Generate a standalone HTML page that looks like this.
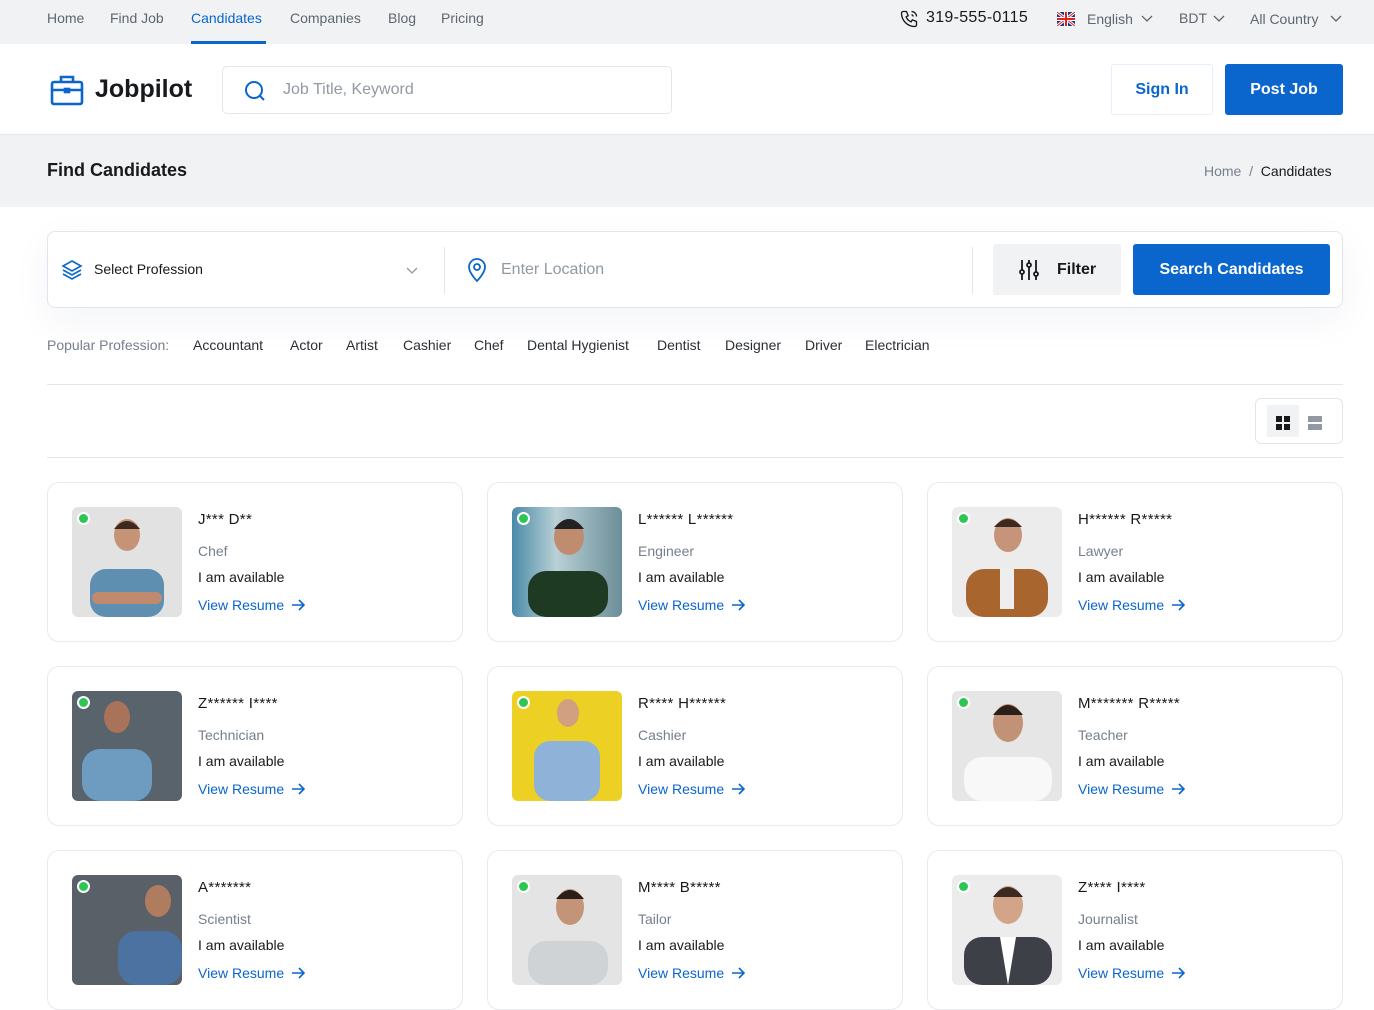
<!DOCTYPE html>
<html><head><meta charset="utf-8"><style>
*{box-sizing:border-box;margin:0;padding:0}
body{width:1374px;height:968px;overflow:hidden;background:#fff;font-family:"Liberation Sans",sans-serif;color:#18191c;position:relative}
.abs{position:absolute}
.top{position:absolute;left:0;top:0;width:1374px;height:44px;background:#f1f2f4}
.top a{position:absolute;top:10px;font-size:14px;color:#5e6670;text-decoration:none}
.hdr{position:absolute;top:44px;left:0;width:1374px;height:91px;border-bottom:1px solid #e4e5e8}
.band{position:absolute;top:135px;left:0;width:1374px;height:72px;background:#f1f2f4}
.card{position:absolute;width:416px;height:160px;border:1px solid #e8eaee;border-radius:12px;background:#fff}
.ph{position:absolute;left:24px;top:24px;width:110px;height:110px;border-radius:6px;overflow:hidden}
.dot{position:absolute;left:5px;top:5px;width:13px;height:13px;border-radius:50%;background:#2dc653;border:2px solid #fff;z-index:2}
.nm{position:absolute;left:150px;top:28px;font-size:15px;color:#18191c;letter-spacing:0.3px}
.pr{position:absolute;left:150px;top:60px;font-size:14px;color:#767f8c}
.av{position:absolute;left:150px;top:86px;font-size:14px;color:#18191c}
.vr{position:absolute;left:150px;top:114px;font-size:14px;color:#0a65cc;white-space:nowrap}
.vr svg{vertical-align:-3px;margin-left:6px}
.pp{position:absolute;top:337px;font-size:14px;color:#2b2f35}
.chev{position:absolute;top:15px}
</style></head><body>
<div class="top">
<a style="left:47px">Home</a><a style="left:110px">Find Job</a>
<a style="left:191px;color:#0a65cc">Candidates</a>
<div class="abs" style="left:191px;top:41px;width:75px;height:3px;background:#0a65cc"></div>
<a style="left:290px">Companies</a><a style="left:388px">Blog</a><a style="left:441px">Pricing</a>
<svg class="abs" style="left:899px;top:9px" width="20" height="20" viewBox="0 0 24 24" fill="none" stroke="#18191c" stroke-width="1.6"><path d="M5 3h4l2 5-2.5 1.5a11 11 0 0 0 6 6L16 13l5 2v4a2 2 0 0 1-2 2A16 16 0 0 1 3 5a2 2 0 0 1 2-2z"/><path d="M15 3a6 6 0 0 1 6 6M15 7a2 2 0 0 1 2 2"/></svg>
<div class="abs" style="left:926px;top:9px;font-size:16px;color:#18191c;letter-spacing:0.3px">319-555-0115</div>
<svg class="abs" style="left:1057px;top:12px" width="18" height="14" viewBox="0 0 18 14"><rect width="18" height="14" fill="#1a3a8a"/><path d="M0 0L18 14M18 0L0 14" stroke="#fff" stroke-width="3"/><path d="M0 0L18 14M18 0L0 14" stroke="#d22" stroke-width="1"/><path d="M9 0v14M0 7h18" stroke="#fff" stroke-width="4"/><path d="M9 0v14M0 7h18" stroke="#d22" stroke-width="2"/></svg>
<a style="left:1087px;top:11px">English</a>
<svg class="chev" style="left:1141px" width="12" height="8" viewBox="0 0 12 8" fill="none" stroke="#5e6670" stroke-width="1.3"><path d="M1 1l5 5 5-5"/></svg>
<a style="left:1179px">BDT</a>
<svg class="chev" style="left:1213px" width="12" height="8" viewBox="0 0 12 8" fill="none" stroke="#5e6670" stroke-width="1.3"><path d="M1 1l5 5 5-5"/></svg>
<a style="left:1250px;top:11px">All Country</a>
<svg class="chev" style="left:1330px" width="12" height="8" viewBox="0 0 12 8" fill="none" stroke="#5e6670" stroke-width="1.3"><path d="M1 1l5 5 5-5"/></svg>
</div>
<div class="hdr">
<svg class="abs" style="left:50px;top:30px" width="34" height="32" viewBox="0 0 34 32" fill="none" stroke="#0a65cc" stroke-width="2.6"><rect x="2" y="8" width="30" height="22" rx="2"/><path d="M11 8V3h12v5M2 16h30"/><rect x="15" y="15" width="4" height="3" fill="#0a65cc"/></svg>
<div class="abs" style="left:95px;top:31px;font-size:25px;font-weight:bold">Jobpilot</div>
<div class="abs" style="left:222px;top:22px;width:450px;height:48px;border:1px solid #e4e5e8;border-radius:5px"></div>
<svg class="abs" style="left:243px;top:35px" width="24" height="24" viewBox="0 0 24 24" fill="none" stroke="#0a65cc" stroke-width="2"><circle cx="11" cy="11" r="8"/><path d="M17 17l4 4"/></svg>
<div class="abs" style="left:283px;top:37px;font-size:16px;color:#9199a3">Job Title, Keyword</div>
<div class="abs" style="left:1111px;top:20px;width:102px;height:51px;border:1px solid #e7f0fa;border-radius:3px;text-align:center;line-height:49px;color:#0a65cc;font-weight:bold;font-size:16px">Sign In</div>
<div class="abs" style="left:1225px;top:20px;width:118px;height:51px;background:#0a65cc;border-radius:3px;text-align:center;line-height:51px;color:#fff;font-weight:bold;font-size:16px">Post Job</div>
</div>
<div class="band">
<div class="abs" style="left:47px;top:25px;font-size:18px;font-weight:bold;color:#18191c">Find Candidates</div>
<div class="abs" style="left:1204px;top:28px;font-size:14px;color:#767f8c">Home &nbsp;/&nbsp; <span style="color:#18191c">Candidates</span></div>
</div>
<div class="abs" style="left:47px;top:231px;width:1296px;height:77px;border:1px solid #e4e5e8;border-radius:8px;box-shadow:0 12px 40px rgba(0,44,109,0.05)"></div>
<svg class="abs" style="left:60px;top:258px" width="24" height="24" viewBox="0 0 24 24" fill="none" stroke="#0a65cc" stroke-width="1.6"><path d="M12 3l9 5-9 5-9-5z"/><path d="M3 12l9 5 9-5M3 16l9 5 9-5"/></svg>
<div class="abs" style="left:94px;top:261px;font-size:14px;color:#18191c">Select Profession</div>
<svg class="abs" style="left:405px;top:265px" width="14" height="10" viewBox="0 0 14 10" fill="none" stroke="#9199a3" stroke-width="1.3"><path d="M2 3l5 5 5-5"/></svg>
<div class="abs" style="left:444px;top:247px;width:1px;height:47px;background:#e4e5e8"></div>
<svg class="abs" style="left:465px;top:257px" width="24" height="26" viewBox="0 0 24 26" fill="none" stroke="#0a65cc" stroke-width="1.8"><path d="M12 24s8-8 8-14a8 8 0 0 0-16 0c0 6 8 14 8 14z"/><circle cx="12" cy="10" r="3"/></svg>
<div class="abs" style="left:501px;top:261px;font-size:16px;color:#9199a3">Enter Location</div>
<div class="abs" style="left:972px;top:247px;width:1px;height:47px;background:#e4e5e8"></div>
<div class="abs" style="left:993px;top:244px;width:128px;height:51px;background:#f1f2f4;border-radius:3px"></div>
<svg class="abs" style="left:1019px;top:259px" width="20" height="22" viewBox="0 0 20 22" fill="none" stroke="#18191c" stroke-width="1.8"><path d="M3 1v20M10 1v20M17 1v20"/><circle cx="3" cy="13" r="2" fill="#f1f2f4"/><circle cx="10" cy="6" r="2" fill="#f1f2f4"/><circle cx="17" cy="15" r="2" fill="#f1f2f4"/></svg>
<div class="abs" style="left:1057px;top:261px;font-size:16px;font-weight:bold">Filter</div>
<div class="abs" style="left:1133px;top:244px;width:197px;height:51px;background:#0a65cc;border-radius:3px;color:#fff;font-weight:bold;font-size:16px;text-align:center;line-height:51px">Search Candidates</div>
<div class="pp" style="left:47px;color:#767f8c">Popular Profession:</div>
<div class="pp" style="left:193px">Accountant</div>
<div class="pp" style="left:290px">Actor</div>
<div class="pp" style="left:346px">Artist</div>
<div class="pp" style="left:403px">Cashier</div>
<div class="pp" style="left:474px">Chef</div>
<div class="pp" style="left:527px">Dental Hygienist</div>
<div class="pp" style="left:657px">Dentist</div>
<div class="pp" style="left:725px">Designer</div>
<div class="pp" style="left:805px">Driver</div>
<div class="pp" style="left:865px">Electrician</div>
<div class="abs" style="left:47px;top:384px;width:1296px;height:1px;background:#e4e5e8"></div>
<div class="abs" style="left:1255px;top:398px;width:88px;height:46px;border:1px solid #e4e5e8;border-radius:6px"></div>
<div class="abs" style="left:1267px;top:405px;width:32px;height:32px;background:#f1f2f4"></div>
<svg class="abs" style="left:1276px;top:416px" width="14" height="14"><rect width="6" height="6" fill="#18191c"/><rect x="8" width="6" height="6" fill="#18191c"/><rect y="8" width="6" height="6" fill="#18191c"/><rect x="8" y="8" width="6" height="6" fill="#18191c"/></svg>
<svg class="abs" style="left:1308px;top:416px" width="14" height="14"><rect width="14" height="6" fill="#9199a3"/><rect y="8" width="14" height="6" fill="#9199a3"/></svg>
<div class="abs" style="left:47px;top:457px;width:1296px;height:1px;background:#e4e5e8"></div>

<!-- cards -->
<div class="card" style="left:47px;top:482px"><div class="ph" style="background:#e2e2e2"><div class="dot"></div><svg width="110" height="110"><rect x="18" y="62" width="74" height="48" rx="16" fill="#5e8fb0"/><ellipse cx="55" cy="28" rx="13" ry="16" fill="#c79377"/><path d="M42 22q13-16 26 0" fill="#3a2a20"/><rect x="20" y="85" width="70" height="12" rx="6" fill="#c08a6e"/></svg></div><div class="nm">J*** D**</div><div class="pr">Chef</div><div class="av">I am available</div><div class="vr">View Resume<svg width="16" height="16" viewBox="0 0 16 16" fill="none" stroke="#0a65cc" stroke-width="1.6"><path d="M2 8h12M9 3l5 5-5 5"/></svg></div></div>
<div class="card" style="left:487px;top:482px"><div class="ph" style="background:linear-gradient(90deg,#4a8aa8,#b9d0d6 40%,#6b8e98)"><div class="dot"></div><svg width="110" height="110"><rect x="16" y="64" width="80" height="46" rx="18" fill="#1f3a22"/><ellipse cx="57" cy="30" rx="15" ry="18" fill="#c08c70"/><path d="M42 22q15-20 30 0" fill="#222"/></svg></div><div class="nm">L****** L******</div><div class="pr">Engineer</div><div class="av">I am available</div><div class="vr">View Resume<svg width="16" height="16" viewBox="0 0 16 16" fill="none" stroke="#0a65cc" stroke-width="1.6"><path d="M2 8h12M9 3l5 5-5 5"/></svg></div></div>
<div class="card" style="left:927px;top:482px"><div class="ph" style="background:#ececec"><div class="dot"></div><svg width="110" height="110"><rect x="14" y="62" width="82" height="48" rx="18" fill="#a8652e"/><rect x="48" y="62" width="14" height="40" fill="#eee"/><ellipse cx="56" cy="28" rx="14" ry="17" fill="#c69478"/><path d="M42 20q14-16 28 0" fill="#3a2a20"/></svg></div><div class="nm">H****** R*****</div><div class="pr">Lawyer</div><div class="av">I am available</div><div class="vr">View Resume<svg width="16" height="16" viewBox="0 0 16 16" fill="none" stroke="#0a65cc" stroke-width="1.6"><path d="M2 8h12M9 3l5 5-5 5"/></svg></div></div>

<div class="card" style="left:47px;top:666px"><div class="ph" style="background:#58636c"><div class="dot"></div><svg width="110" height="110"><rect x="10" y="58" width="70" height="52" rx="18" fill="#6d9cc0"/><ellipse cx="45" cy="26" rx="13" ry="16" fill="#a9735a"/></svg></div><div class="nm">Z****** I****</div><div class="pr">Technician</div><div class="av">I am available</div><div class="vr">View Resume<svg width="16" height="16" viewBox="0 0 16 16" fill="none" stroke="#0a65cc" stroke-width="1.6"><path d="M2 8h12M9 3l5 5-5 5"/></svg></div></div>
<div class="card" style="left:487px;top:666px"><div class="ph" style="background:#ecd023"><div class="dot"></div><svg width="110" height="110"><rect x="22" y="50" width="66" height="60" rx="16" fill="#8fb3d8"/><ellipse cx="56" cy="22" rx="11" ry="14" fill="#d0a080"/></svg></div><div class="nm">R**** H******</div><div class="pr">Cashier</div><div class="av">I am available</div><div class="vr">View Resume<svg width="16" height="16" viewBox="0 0 16 16" fill="none" stroke="#0a65cc" stroke-width="1.6"><path d="M2 8h12M9 3l5 5-5 5"/></svg></div></div>
<div class="card" style="left:927px;top:666px"><div class="ph" style="background:#e6e6e6"><div class="dot"></div><svg width="110" height="110"><rect x="12" y="66" width="88" height="44" rx="18" fill="#f8f8f8"/><ellipse cx="56" cy="32" rx="15" ry="19" fill="#c29276"/><path d="M41 24q15-20 30 0" fill="#2b2019"/></svg></div><div class="nm">M******* R*****</div><div class="pr">Teacher</div><div class="av">I am available</div><div class="vr">View Resume<svg width="16" height="16" viewBox="0 0 16 16" fill="none" stroke="#0a65cc" stroke-width="1.6"><path d="M2 8h12M9 3l5 5-5 5"/></svg></div></div>

<div class="card" style="left:47px;top:850px"><div class="ph" style="background:#5a6068"><div class="dot"></div><svg width="110" height="110"><rect x="46" y="56" width="64" height="54" rx="18" fill="#4b72a0"/><ellipse cx="86" cy="26" rx="13" ry="16" fill="#b07c60"/></svg></div><div class="nm">A*******</div><div class="pr">Scientist</div><div class="av">I am available</div><div class="vr">View Resume<svg width="16" height="16" viewBox="0 0 16 16" fill="none" stroke="#0a65cc" stroke-width="1.6"><path d="M2 8h12M9 3l5 5-5 5"/></svg></div></div>
<div class="card" style="left:487px;top:850px"><div class="ph" style="background:#e4e4e4"><div class="dot"></div><svg width="110" height="110"><rect x="16" y="66" width="80" height="44" rx="18" fill="#cfd3d6"/><ellipse cx="58" cy="32" rx="14" ry="18" fill="#c49478"/><path d="M44 24q14-18 28 0" fill="#2b2019"/></svg></div><div class="nm">M**** B*****</div><div class="pr">Tailor</div><div class="av">I am available</div><div class="vr">View Resume<svg width="16" height="16" viewBox="0 0 16 16" fill="none" stroke="#0a65cc" stroke-width="1.6"><path d="M2 8h12M9 3l5 5-5 5"/></svg></div></div>
<div class="card" style="left:927px;top:850px"><div class="ph" style="background:#ececec"><div class="dot"></div><svg width="110" height="110"><rect x="12" y="62" width="88" height="48" rx="18" fill="#3e4048"/><path d="M48 62h16l-8 48z" fill="#fff"/><ellipse cx="56" cy="30" rx="15" ry="19" fill="#d2a488"/><path d="M41 22q15-20 30 0" fill="#3a2a20"/></svg></div><div class="nm">Z**** I****</div><div class="pr">Journalist</div><div class="av">I am available</div><div class="vr">View Resume<svg width="16" height="16" viewBox="0 0 16 16" fill="none" stroke="#0a65cc" stroke-width="1.6"><path d="M2 8h12M9 3l5 5-5 5"/></svg></div></div>
</body></html>
